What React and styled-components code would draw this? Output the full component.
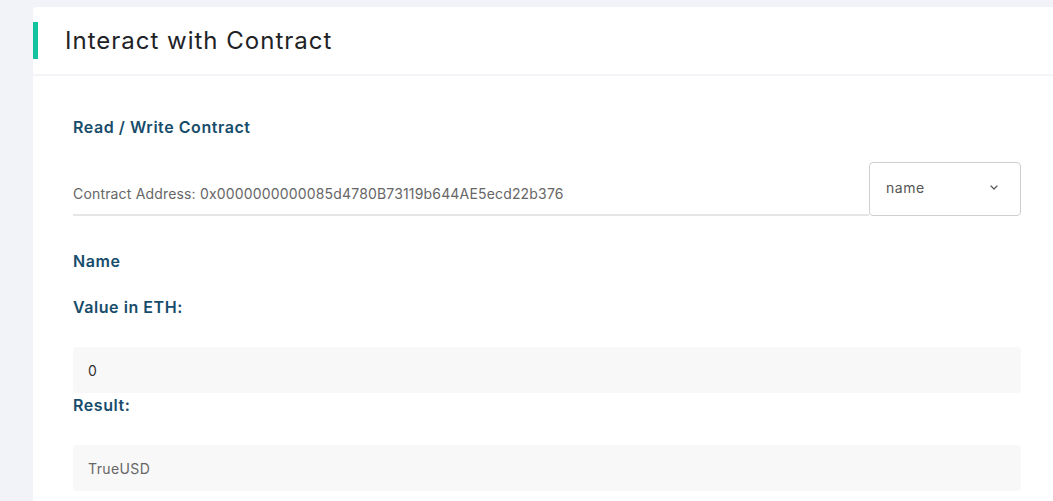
import React from 'react'
import styled, { createGlobalStyle } from 'styled-components'

const GlobalStyle = createGlobalStyle`
  html, body {
    margin: 0;
    padding: 0;
    background: #f2f3f8;
    font-family: Inter, "Noto Sans", sans-serif;
  }
`;

const Page = styled.div`
  display: flex;
  padding: 7px 0 0 33px;
  height: 494px;
  overflow: hidden;
`;

const Card = styled.div`
  flex: 1;
  background: #fff;
  border-radius: 4px 0 0 0;
  display: flex;
  flex-direction: column;
`;

const Header = styled.div`
  display: flex;
  align-items: center;
  height: 67px;
  border-bottom: 2px solid #f3f4f7;
`;

const Accent = styled.span`
  width: 5px;
  height: 37px;
  background: #13c3a0;
`;

const Title = styled.h2`
  margin: 0 0 0 27px;
  font-size: 24px;
  font-weight: 400;
  letter-spacing: 1px;
  color: #212226;
`;

const Body = styled.div`
  padding: 41px 32px 0 40px;
  display: flex;
  flex-direction: column;
`;

const Heading = styled.div`
  font-size: 16px;
  line-height: 20px;
  font-weight: 600;
  letter-spacing: 0.55px;
  color: #174c6b;
  margin-top: ${(p) => p.$top || 0}px;
`;

const InputRow = styled.div`
  display: flex;
  margin-top: 25px;
  height: 54px;
`;

const Address = styled.div`
  flex: 1;
  display: flex;
  align-items: flex-end;
  padding-bottom: 10px;
  border-bottom: 2px solid #e6e6e6;
  font-size: 14px;
  line-height: 20px;
  letter-spacing: 0.17px;
  color: #666;
`;

const Select = styled.div`
  width: 152px;
  box-sizing: border-box;
  border: 1px solid #cfcfcf;
  border-radius: 4px;
  display: flex;
  align-items: center;
  justify-content: space-between;
  padding: 0 22px 4px 16px;
  font-size: 14px;
  letter-spacing: 0.5px;
  color: #555;
`;

const ValueBox = styled.div`
  margin-top: 30px;
  height: 46px;
  background: #f8f8f8;
  border-radius: 4px;
  display: flex;
  align-items: center;
  padding-left: 15px;
  font-size: 14px;
  letter-spacing: 0.4px;
  color: ${(p) => p.$color || '#666'};
`;

const Chevron = () => (
  <svg width="8" height="5" viewBox="0 0 8 5">
    <path d="M1 1l3 3 3-3" fill="none" stroke="#555" strokeWidth="1.2" strokeLinecap="round" strokeLinejoin="round" />
  </svg>
);

export default function App() {
  return (
    <>
      <GlobalStyle />
      <Page>
        <Card>
          <Header>
            <Accent />
            <Title>Interact with Contract</Title>
          </Header>
          <Body>
            <Heading>Read / Write Contract</Heading>
            <InputRow>
              <Address>Contract Address: 0x0000000000085d4780B73119b644AE5ecd22b376</Address>
              <Select>
                name
                <Chevron />
              </Select>
            </InputRow>
            <Heading $top={35}>Name</Heading>
            <Heading $top={26}>Value in ETH:</Heading>
            <ValueBox $color="#333">0</ValueBox>
            <Heading $top={2}>Result:</Heading>
            <ValueBox>TrueUSD</ValueBox>
          </Body>
        </Card>
      </Page>
    </>
  )
}
